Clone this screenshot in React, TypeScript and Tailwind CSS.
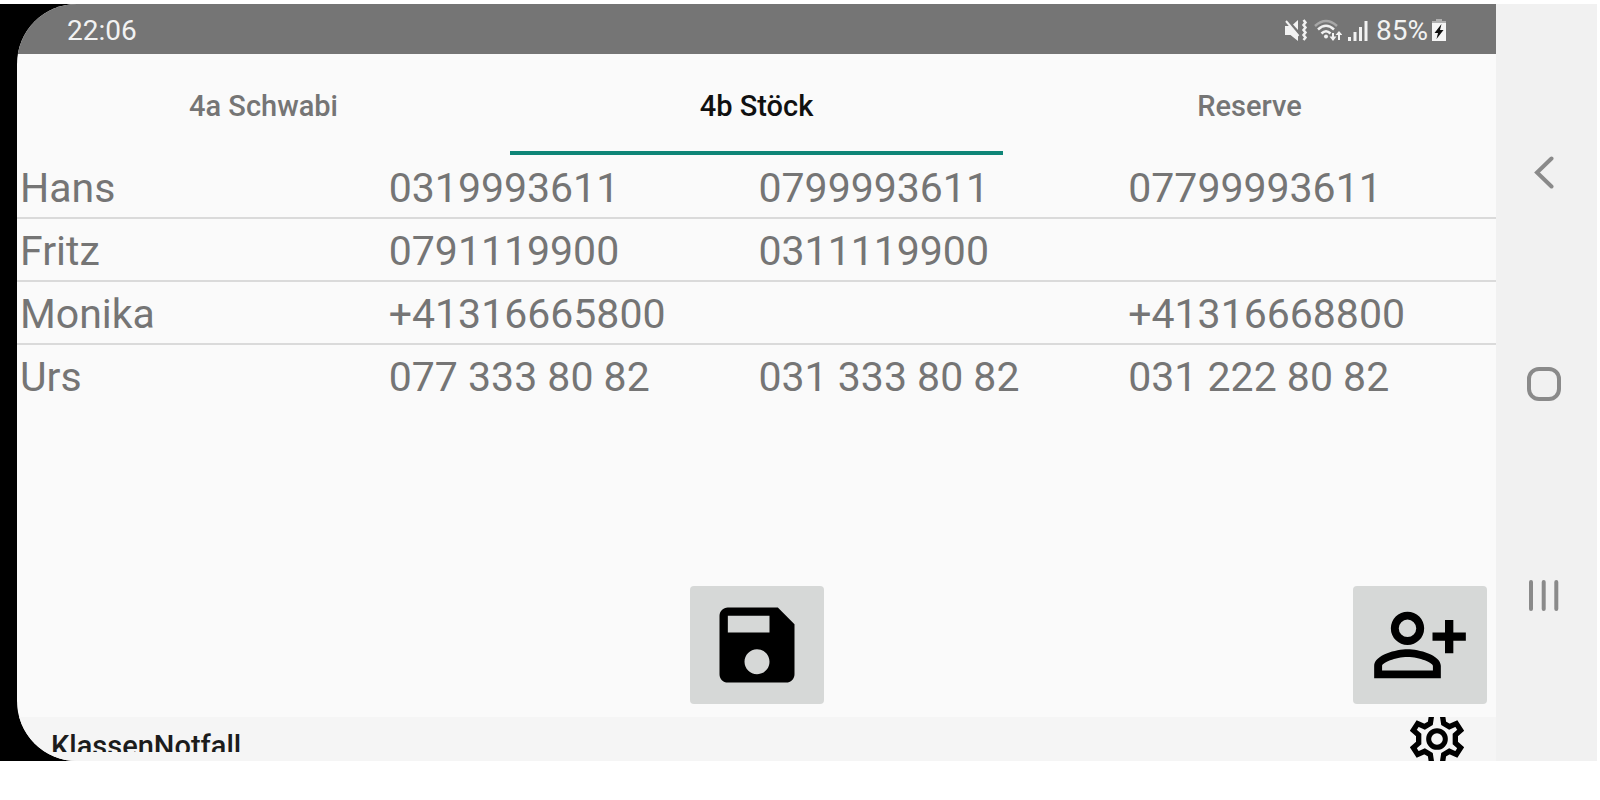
import { useState } from "react";

type Contact = {
  name: string;
  phones: string[];
};

const tabs = ["4a Schwabi", "4b Stöck", "Reserve"];

const contacts: Contact[] = [
  { name: "Hans", phones: ["0319993611", "0799993611", "07799993611"] },
  { name: "Fritz", phones: ["0791119900", "0311119900", ""] },
  { name: "Monika", phones: ["+41316665800", "", "+41316668800"] },
  { name: "Urs", phones: ["077 333 80 82", "031 333 80 82", "031 222 80 82"] },
];

export default function App() {
  const [activeTab, setActiveTab] = useState("4b Stöck");

  return (
    <div className="flex h-screen flex-col bg-white pt-1 pr-[3px] pb-[39px] font-['Roboto',sans-serif]">
      <div className="flex min-h-0 flex-1 bg-black pl-[17px]">
        <main className="flex min-w-0 flex-1 flex-col overflow-hidden rounded-l-[60px] bg-[#fafafa]">
          <StatusBar />
          <div className="grid shrink-0 grid-cols-3" role="tablist">
            {tabs.map((tab) => (
              <button
                aria-selected={tab === activeTab}
                className={`h-[101px] border-b-4 pt-2 text-[29px] font-medium ${tab === activeTab ? "border-[#0f8577] text-[#101010]" : "border-transparent text-[#757575]"}`}
                key={tab}
                onClick={() => setActiveTab(tab)}
                role="tab"
                type="button"
              >
                {tab}
              </button>
            ))}
          </div>
          <ContactTable />
          <div className="mt-auto grid shrink-0 grid-cols-3 items-center pb-[13px]">
            <button aria-label="Save" className="col-start-2 flex h-[118px] w-[134px] items-center justify-center justify-self-center rounded bg-[#d6d8d7]" type="button">
              <SaveIcon />
            </button>
            <button aria-label="Add contact" className="mr-[9px] flex h-[118px] w-[134px] items-center justify-center justify-self-end rounded bg-[#d6d8d7]" type="button">
              <PersonAddIcon />
            </button>
          </div>
          <footer className="flex h-11 shrink-0 items-start justify-between overflow-hidden bg-[#f5f5f5] pr-[26px] pl-[34px]">
            <h1 className="h-[35px] overflow-hidden pt-[13px] text-[29px] leading-8 font-medium text-[#1c1c1c]">KlassenNotfall</h1>
            <button aria-label="Settings" type="button">
              <SettingsIcon />
            </button>
          </footer>
        </main>
        <NavigationBar />
      </div>
    </div>
  );
}

function StatusBar() {
  return (
    <header className="flex h-[50px] shrink-0 items-center justify-between bg-[#757575] pr-[50px] pl-[50px] text-[28px] text-[#f2f2f2]">
      <time className="pt-[3px]">22:06</time>
      <div className="flex items-center pt-[3px]">
        <MuteIcon />
        <WifiIcon />
        <SignalIcon />
        <span>85%</span>
        <BatteryIcon />
      </div>
    </header>
  );
}

function ContactTable() {
  return (
    <table className="w-full table-fixed text-left text-[41px] text-[#757575]">
      <tbody>
        {contacts.map((contact) => (
          <tr className="h-[63px] border-b-2 border-[#dadada] last:h-[61px] last:border-b-0" key={contact.name}>
            <th className="p-0 pt-1 pl-[3px] leading-[55px] font-normal" scope="row">{contact.name}</th>
            {contact.phones.map((phone, index) => (
              <td className="p-0 pt-1 pl-0.5 leading-[55px]" key={index}>{phone}</td>
            ))}
          </tr>
        ))}
      </tbody>
    </table>
  );
}

function NavigationBar() {
  return (
    <nav className="flex w-[101px] shrink-0 flex-col items-center justify-between bg-[#f1f1f1] pt-[151px] pr-1.5 pb-[149px] text-[#8a8a8a]">
      <button aria-label="Back" type="button">
        <svg className="h-[34px] w-[34px]" fill="none" stroke="currentColor" strokeLinecap="round" strokeWidth="4" viewBox="0 0 34 34">
          <path d="M24.5 3.5 10 17.5l14.5 14" />
        </svg>
      </button>
      <button aria-label="Home" type="button">
        <svg className="h-[34px] w-[34px]" fill="none" stroke="currentColor" strokeWidth="4" viewBox="0 0 34 34">
          <rect height="30" rx="10" width="30" x="2" y="2" />
        </svg>
      </button>
      <button aria-label="Recent apps" type="button">
        <svg className="h-[34px] w-[34px]" fill="none" stroke="currentColor" strokeLinecap="round" strokeWidth="4" viewBox="0 0 34 34">
          <path d="M4 4v27M16.7 4v27M29.3 4v27" />
        </svg>
      </button>
    </nav>
  );
}

function SaveIcon() {
  return (
    <svg className="h-[100px] w-[100px]" viewBox="0 0 24 24">
      <path d="M17 3H5c-1.11 0-2 .9-2 2v14c0 1.1.89 2 2 2h14c1.1 0 2-.9 2-2V7l-4-4zm-5 16c-1.66 0-3-1.34-3-3s1.34-3 3-3 3 1.34 3 3-1.34 3-3 3zm3-10H5V5h10v4z" />
    </svg>
  );
}

function PersonAddIcon() {
  return (
    <svg className="h-[100px] w-[100px]" fillRule="evenodd" viewBox="0 0 24 24">
      <path d="M9 4a4 4 0 1 0 0 8 4 4 0 0 0 0-8zm0 1.9a2.1 2.1 0 1 1 0 4.2 2.1 2.1 0 0 1 0-4.2z" />
      <path d="M9 13c-2.67 0-8 1.34-8 4v3h16v-3c0-2.66-5.33-4-8-4zm0 1.9c2.97 0 6.1 1.46 6.1 2.1v1.1H2.9V17c0-.64 3.13-2.1 6.1-2.1z" />
      <path d="M18 6h2v3h3v2h-3v3h-2v-3h-3V9h3z" />
    </svg>
  );
}

// The gear is taller than the bar, so its top and bottom teeth run off the view box
function SettingsIcon() {
  return (
    <svg className="h-11 w-[66px]" fill="none" stroke="#000" strokeWidth="16" viewBox="-99 -66 198 132">
      <circle r="25" strokeWidth="15" />
      <path d="M15 -80 20 -47 37 -37 58 -46 71 -26 55 -12V12L71 26 58 46 37 37 20 47 15 80" />
      <path d="M-15 -80-20 -47-37 -37-58 -46-71 -26-55 -12V12L-71 26-58 46-37 37-20 47-15 80" />
    </svg>
  );
}

function MuteIcon() {
  return (
    <svg className="mr-1.5 h-6 w-6" fill="currentColor" viewBox="0 0 24 24">
      <path d="M1 7h5l8 8.5V22l-7.5-6H1z" />
      <path d="M9 5.5 14 1v10z" />
      <path d="m2 2 12.500 15" fill="none" stroke="currentColor" strokeWidth="2" />
      <path d="m19.500 1 2 2.500-2 2.500 2 2.500-2 2.500 2 2.500-2 2.500 2 2.500-2 2.500" fill="none" stroke="currentColor" strokeWidth="2.500" />
    </svg>
  );
}

function WifiIcon() {
  return (
    <svg className="mr-1.5 h-6 w-7" fill="none" stroke="currentColor" strokeWidth="2.5" viewBox="0 0 28 24">
      <path d="M1 7Q12 -3 23 7" opacity=".4" />
      <path d="M4 10.5Q12 3 20 10.5M7.5 14.5Q12 10 16.5 14.5" />
      <circle cx="12" cy="17.5" fill="currentColor" r="2" stroke="none" />
      <path d="M19 14v5M25 21v-6" strokeWidth="2" />
      <path d="M15.5 17.5h7L19 22zM21.5 16h7L25 12z" fill="currentColor" stroke="none" />
    </svg>
  );
}

function SignalIcon() {
  return (
    <svg className="mr-2 h-6 w-5" fill="currentColor" viewBox="0 0 20 24">
      <path d="M0 18h3v4H0zM5.5 13h3v9h-3zM11 8h3v14h-3zM16.5 2h3v20h-3z" />
    </svg>
  );
}

function BatteryIcon() {
  return (
    <svg className="ml-1 h-6 w-[14px]" viewBox="0 0 14 24">
      <path d="M4 0h6v2h4v3H0V2h4z" fill="#b0b0b0" />
      <path d="M0 4h14v18H0z" fill="#f5f5f5" />
      <path d="M9.5 5 2.5 14H6l-1.5 6 7-9H8z" fill="#111" />
    </svg>
  );
}
